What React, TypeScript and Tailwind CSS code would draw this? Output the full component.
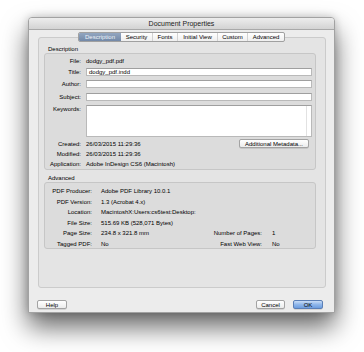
import React from 'react';

const font = "font-['Liberation_Sans',Arial,sans-serif]";

const Field: React.FC<{ value?: string; tall?: boolean }> = ({ value, tall }) => (
  <div
    className={`relative w-[226px] bg-white border border-[#b9b9b9] border-t-[#9f9f9f] flex items-center pl-[2px] text-[6px] leading-[6px] text-black ${tall ? 'h-[32px]' : 'h-[8px]'}`}
  >
    {value}
    {tall && <div className="absolute right-[4px] top-0 bottom-0 border-l border-[#e2e2e2]" />}
  </div>
);

const Row: React.FC<{ label: string; className?: string; children: React.ReactNode; alignTop?: boolean }> = ({ label, className, children, alignTop }) => (
  <div className={`flex ${alignTop ? 'items-start' : 'items-center'} gap-[5px] ${className ?? ''}`}>
    <span className="w-[36px] shrink-0 text-right whitespace-nowrap text-[6px] leading-[8px] text-black">{label}</span>
    {children}
  </div>
);

const MacButton: React.FC<{ label: string; primary?: boolean; width: string }> = ({ label, primary, width }) => (
  <button
    className={`${width} h-[9px] rounded-[2px] border flex items-center justify-center text-[6px] leading-[6px] text-black shadow-[0_0.5px_0.5px_rgba(0,0,0,0.2)] ${primary ? 'border-[#5b7fb6] bg-gradient-to-b from-[#c9ddf6] via-[#8fb6ea] to-[#6c9ddf]' : 'border-[#a3a3a3] bg-gradient-to-b from-white to-[#ececec]'}`}
  >
    {label}
  </button>
);

const tabs = [
  { label: 'Description', w: 'w-[42px]' },
  { label: 'Security', w: 'w-[31px]' },
  { label: 'Fonts', w: 'w-[25px]' },
  { label: 'Initial View', w: 'w-[40px]' },
  { label: 'Custom', w: 'w-[30px]' },
  { label: 'Advanced', w: 'w-[37px]' },
];

const advRows: { label: string; value: string; rl?: string; rv?: string }[] = [
  { label: 'PDF Producer:', value: 'Adobe PDF Library 10.0.1' },
  { label: 'PDF Version:', value: '1.3 (Acrobat 4.x)' },
  { label: 'Location:', value: 'MacintoshX:Users:cs6test:Desktop:' },
  { label: 'File Size:', value: '515.69 KB (528,071 Bytes)' },
  { label: 'Page Size:', value: '234.8 x 321.8 mm', rl: 'Number of Pages:', rv: '1' },
  { label: 'Tagged PDF:', value: 'No', rl: 'Fast Web View:', rv: 'No' },
];

export default function App() {
  return (
    <div className={`w-[364px] h-[352px] bg-white overflow-hidden pt-[17px] pl-[28px] ${font}`}>
      <div className="w-[307px] h-[296px] flex flex-col bg-[#ececec] border border-[#a2a2a2] rounded-t-[4px] shadow-[0_14px_26px_rgba(0,0,0,0.6),0_0_8px_rgba(0,0,0,0.2)]">
        {/* Title bar */}
        <div className="h-[12px] shrink-0 flex items-center justify-center border-b border-[#a9a9a9] rounded-t-[3px] bg-gradient-to-b from-[#ededed] to-[#d3d3d3] text-[7px] leading-[7px] text-[#222]">
          Document Properties
        </div>

        {/* Tabs */}
        <div className="relative z-10 mt-[2px] flex justify-center">
          <div className="flex h-[10px] rounded-[2px] border border-[#a0a0a0] bg-gradient-to-b from-white to-[#efefef] overflow-hidden">
            {tabs.map((t, i) => (
              <div
                key={t.label}
                className={`${t.w} flex items-center justify-center text-[6px] leading-[6px] whitespace-nowrap ${i === 0 ? 'bg-gradient-to-b from-[#93a6c0] to-[#7389a8] text-[#eef2f8]' : 'text-black'} ${i > 1 ? 'border-l border-[#d2d2d2]' : ''}`}
              >
                {t.label}
              </div>
            ))}
          </div>
        </div>

        {/* Tab panel */}
        <div className="-mt-[5px] ml-[9px] mr-[8px] h-[251px] shrink-0 rounded-[3px] border border-[#cbcbcb] bg-[#e4e4e4] pt-[7.5px]">
          <div className="pl-[9px] h-[7px] text-[6px] leading-[7px] text-black">Description</div>
          <div className="ml-[5px] w-[272px] h-[117px] rounded-[3px] border border-[#c6c6c6] bg-[#dcdcdc] pt-[3px]">
            <Row label="File:" className="h-[8px]">
              <span className="text-[6px] leading-[8px] text-black">dodgy_pdf.pdf</span>
            </Row>
            <Row label="Title:" className="mt-[3px] h-[8px]">
              <Field value="dodgy_pdf.indd" />
            </Row>
            <Row label="Author:" className="mt-[4px] h-[8px]">
              <Field />
            </Row>
            <Row label="Subject:" className="mt-[5px] h-[8px]">
              <Field />
            </Row>
            <Row label="Keywords:" className="mt-[4px] h-[32px]" alignTop>
              <Field tall />
            </Row>
            <Row label="Created:" className="mt-[3px] h-[8px]">
              <span className="text-[6px] leading-[8px] text-black">26/03/2015 11:29:36</span>
              <div className="ml-auto mr-[6px]">
                <MacButton label="Additional Metadata..." width="w-[70px]" />
              </div>
            </Row>
            <Row label="Modified:" className="mt-[2px] h-[8px]">
              <span className="text-[6px] leading-[8px] text-black">26/03/2015 11:29:36</span>
            </Row>
            <Row label="Application:" className="mt-[2px] h-[8px]">
              <span className="text-[6px] leading-[8px] text-black">Adobe InDesign CS6 (Macintosh)</span>
            </Row>
          </div>

          <div className="mt-[5.5px] pl-[9px] h-[7px] text-[6px] leading-[7px] text-black">Advanced</div>
          <div className="ml-[5px] w-[272px] h-[67px] rounded-[3px] border border-[#c6c6c6] bg-[#dcdcdc] pt-[3px]">
            {advRows.map((r) => (
              <div key={r.label} className="flex items-center h-[10.5px] text-[6px] leading-[8px] text-black whitespace-nowrap">
                <span className="w-[47px] shrink-0 text-right">{r.label}</span>
                <span className="ml-[9px] w-[110px] shrink-0">{r.value}</span>
                {r.rl && (
                  <>
                    <span className="w-[51px] shrink-0 text-right">{r.rl}</span>
                    <span className="ml-[10px]">{r.rv}</span>
                  </>
                )}
              </div>
            ))}
          </div>
        </div>

        {/* Bottom buttons */}
        <div className="mt-[12px] flex items-center pl-[8px] pr-[11px]">
          <MacButton label="Help" width="w-[30px]" />
          <div className="ml-auto flex gap-[8px]">
            <MacButton label="Cancel" width="w-[29px]" />
            <MacButton label="OK" primary width="w-[30px]" />
          </div>
        </div>
      </div>
    </div>
  );
}
